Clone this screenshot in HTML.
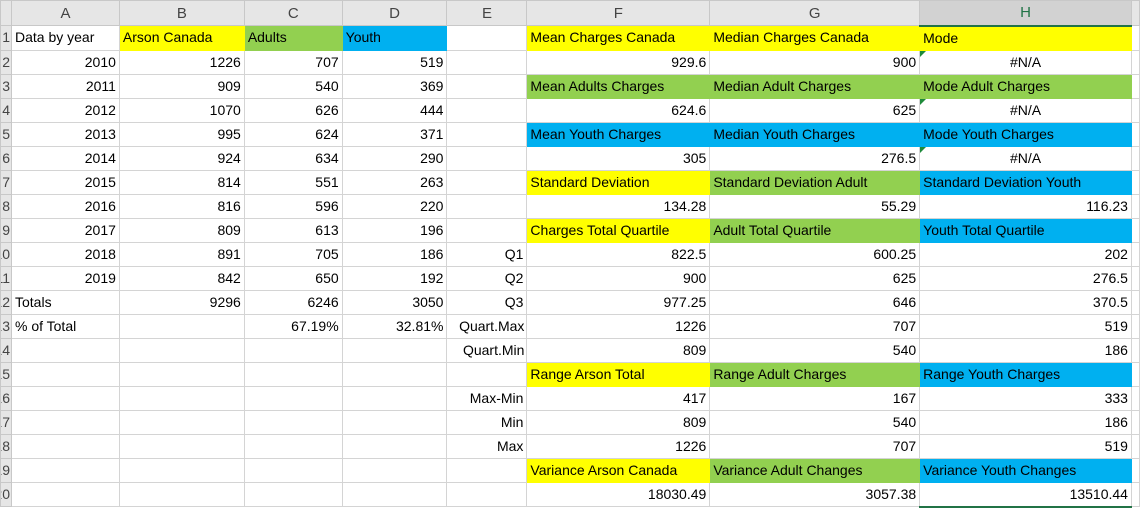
<!DOCTYPE html>
<html><head><style>
body{margin:0;width:1140px;height:506px;overflow:hidden;background:#fff;font-family:"Liberation Sans",sans-serif;font-size:14px;color:#000}
table{border-collapse:collapse;table-layout:fixed;position:absolute;left:0;top:0}
td{height:23px;padding:0 3px;border:1px solid #d4d4d4;white-space:nowrap;overflow:visible;line-height:23px;box-sizing:border-box}
tr.h td{height:25px;background:#e6e6e6;text-align:center;color:#444;font-size:15px;border-color:#c8c8c8}
tr.h td.sel{background:#d2d2d2;color:#217346;border-bottom:2px solid #217346}
td.rh{background:#e6e6e6;padding:0;color:#444;border-color:#c8c8c8}
td.rh div{position:relative;width:10px;height:23px;overflow:hidden}
td.rh span{position:absolute;right:1px;top:0}
.r{text-align:right}.c{text-align:center}
.y{background:#ffff00;border-color:#ffff00}.g{background:#92d050;border-color:#92d050}.b{background:#00b0f0;border-color:#00b0f0}
.tri{position:relative}
.tri::before{content:"";position:absolute;left:0;top:0;border-top:6px solid #1e8a3a;border-right:6px solid transparent}
.selc{border-bottom:2px solid #217346}
</style></head><body>
<table>
<colgroup><col style="width:11px"><col style="width:108px"><col style="width:125px"><col style="width:98px"><col style="width:105px"><col style="width:80px"><col style="width:183px"><col style="width:210px"><col style="width:212px"><col style="width:8px"></colgroup>
<tr class="h"><td></td><td>A</td><td>B</td><td>C</td><td>D</td><td>E</td><td>F</td><td>G</td><td class="sel">H</td><td></td></tr>
<tr><td class="rh"><div><span>1</span></div></td><td>Data by year</td><td class="y">Arson Canada</td><td class="g">Adults</td><td class="b">Youth</td><td></td><td class="y">Mean Charges Canada</td><td class="y">Median Charges Canada</td><td class="y">Mode</td><td></td></tr>
<tr><td class="rh"><div><span>2</span></div></td><td class="r">2010</td><td class="r">1226</td><td class="r">707</td><td class="r">519</td><td></td><td class="r">929.6</td><td class="r">900</td><td class="c tri">#N/A</td><td></td></tr>
<tr><td class="rh"><div><span>3</span></div></td><td class="r">2011</td><td class="r">909</td><td class="r">540</td><td class="r">369</td><td></td><td class="g">Mean Adults Charges</td><td class="g">Median Adult Charges</td><td class="g">Mode Adult Charges</td><td></td></tr>
<tr><td class="rh"><div><span>4</span></div></td><td class="r">2012</td><td class="r">1070</td><td class="r">626</td><td class="r">444</td><td></td><td class="r">624.6</td><td class="r">625</td><td class="c tri">#N/A</td><td></td></tr>
<tr><td class="rh"><div><span>5</span></div></td><td class="r">2013</td><td class="r">995</td><td class="r">624</td><td class="r">371</td><td></td><td class="b">Mean Youth Charges</td><td class="b">Median Youth Charges</td><td class="b">Mode Youth Charges</td><td></td></tr>
<tr><td class="rh"><div><span>6</span></div></td><td class="r">2014</td><td class="r">924</td><td class="r">634</td><td class="r">290</td><td></td><td class="r">305</td><td class="r">276.5</td><td class="c tri">#N/A</td><td></td></tr>
<tr><td class="rh"><div><span>7</span></div></td><td class="r">2015</td><td class="r">814</td><td class="r">551</td><td class="r">263</td><td></td><td class="y">Standard Deviation</td><td class="g">Standard Deviation Adult</td><td class="b">Standard Deviation Youth</td><td></td></tr>
<tr><td class="rh"><div><span>8</span></div></td><td class="r">2016</td><td class="r">816</td><td class="r">596</td><td class="r">220</td><td></td><td class="r">134.28</td><td class="r">55.29</td><td class="r">116.23</td><td></td></tr>
<tr><td class="rh"><div><span>9</span></div></td><td class="r">2017</td><td class="r">809</td><td class="r">613</td><td class="r">196</td><td></td><td class="y">Charges Total Quartile</td><td class="g">Adult Total Quartile</td><td class="b">Youth Total Quartile</td><td></td></tr>
<tr><td class="rh"><div><span>10</span></div></td><td class="r">2018</td><td class="r">891</td><td class="r">705</td><td class="r">186</td><td class="r">Q1</td><td class="r">822.5</td><td class="r">600.25</td><td class="r">202</td><td></td></tr>
<tr><td class="rh"><div><span>11</span></div></td><td class="r">2019</td><td class="r">842</td><td class="r">650</td><td class="r">192</td><td class="r">Q2</td><td class="r">900</td><td class="r">625</td><td class="r">276.5</td><td></td></tr>
<tr><td class="rh"><div><span>12</span></div></td><td>Totals</td><td class="r">9296</td><td class="r">6246</td><td class="r">3050</td><td class="r">Q3</td><td class="r">977.25</td><td class="r">646</td><td class="r">370.5</td><td></td></tr>
<tr><td class="rh"><div><span>13</span></div></td><td>% of Total</td><td></td><td class="r">67.19%</td><td class="r">32.81%</td><td class="r" style="padding:0 2px 0 0">Quart.Max</td><td class="r">1226</td><td class="r">707</td><td class="r">519</td><td></td></tr>
<tr><td class="rh"><div><span>14</span></div></td><td></td><td></td><td></td><td></td><td class="r" style="padding:0 2px 0 0">Quart.Min</td><td class="r">809</td><td class="r">540</td><td class="r">186</td><td></td></tr>
<tr><td class="rh"><div><span>15</span></div></td><td></td><td></td><td></td><td></td><td></td><td class="y">Range Arson Total</td><td class="g">Range Adult Charges</td><td class="b">Range Youth Charges</td><td></td></tr>
<tr><td class="rh"><div><span>16</span></div></td><td></td><td></td><td></td><td></td><td class="r">Max-Min</td><td class="r">417</td><td class="r">167</td><td class="r">333</td><td></td></tr>
<tr><td class="rh"><div><span>17</span></div></td><td></td><td></td><td></td><td></td><td class="r">Min</td><td class="r">809</td><td class="r">540</td><td class="r">186</td><td></td></tr>
<tr><td class="rh"><div><span>18</span></div></td><td></td><td></td><td></td><td></td><td class="r">Max</td><td class="r">1226</td><td class="r">707</td><td class="r">519</td><td></td></tr>
<tr><td class="rh"><div><span>19</span></div></td><td></td><td></td><td></td><td></td><td></td><td class="y">Variance Arson Canada</td><td class="g">Variance Adult Changes</td><td class="b">Variance Youth Changes</td><td></td></tr>
<tr><td class="rh"><div><span>20</span></div></td><td></td><td></td><td></td><td></td><td></td><td class="r">18030.49</td><td class="r">3057.38</td><td class="r selc">13510.44</td><td></td></tr>
</table>
</body></html>
